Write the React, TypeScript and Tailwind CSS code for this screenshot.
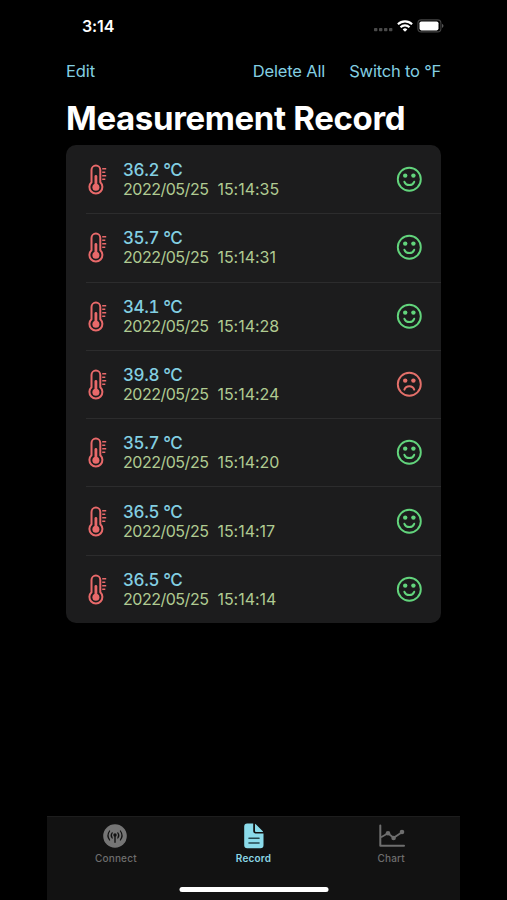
import { ReactNode } from "react";

type Measurement = {
  id: number;
  value: string;
  date: string;
  time: string;
  fever?: boolean;
};

const MEASUREMENTS: Measurement[] = [
  { id: 7, value: "36.2", date: "2022/05/25", time: "15:14:35" },
  { id: 6, value: "35.7", date: "2022/05/25", time: "15:14:31" },
  { id: 5, value: "34.1", date: "2022/05/25", time: "15:14:28" },
  { id: 4, value: "39.8", date: "2022/05/25", time: "15:14:24", fever: true },
  { id: 3, value: "35.7", date: "2022/05/25", time: "15:14:20" },
  { id: 2, value: "36.5", date: "2022/05/25", time: "15:14:17" },
  { id: 1, value: "36.5", date: "2022/05/25", time: "15:14:14" },
];

function ThermometerIcon() {
  return (
    <svg width="20" height="32" viewBox="0 0 20 32" fill="none" stroke="#e8696a" className="shrink-0">
      <path
        d="M4.5 7a4.4 4.4 0 0 1 8.8 0v12.2a6.5 6.5 0 1 1-8.8 0z"
        strokeWidth="2"
        strokeLinejoin="round"
      />
      <path d="M8.9 13.5v9.5" strokeWidth="2.8" strokeLinecap="round" />
      <circle cx="8.9" cy="24.2" r="3.5" fill="#e8696a" stroke="none" />
      <path d="M15.2 5.8h4M15.2 9.3h3.1M15.2 12.8h4M15.2 16.3h3.1" strokeWidth="1.5" />
    </svg>
  );
}

function FaceIcon({ sad }: { sad?: boolean }) {
  const color = sad ? "#e4706a" : "#62d47c";
  return (
    <svg width="26" height="26" viewBox="0 0 26 26" fill="none" stroke={color} className="shrink-0">
      <circle cx="13.3" cy="13.3" r="11.5" strokeWidth="1.9" />
      <circle cx="9.2" cy="9.6" r="2.2" fill={color} stroke="none" />
      <circle cx="17.4" cy="9.6" r="2.2" fill={color} stroke="none" />
      <path
        d={sad ? "M8.4 18.6c1.6-4.6 8.2-4.6 9.8 0" : "M8.4 15.8c1.7 4.4 8.1 4.4 9.8 0"}
        strokeWidth="2"
        strokeLinecap="round"
      />
    </svg>
  );
}

function StatusBar() {
  return (
    <div className="flex h-[52px] items-center justify-between pl-[35px] pr-[16px]">
      <span className="text-[16px] font-semibold tracking-[-0.1px]">3:14</span>
      <div className="flex items-center">
        <svg width="20" height="14" viewBox="0 0 20 14" fill="#4a4a4a">
          <rect x="1" y="9" width="3.4" height="3.2" rx="0.8" />
          <rect x="6" y="9" width="3.4" height="3.2" rx="0.8" />
          <rect x="11" y="9" width="3.4" height="3.2" rx="0.8" />
          <rect x="16" y="9" width="3.4" height="3.2" rx="0.8" />
        </svg>
        <svg width="16" height="12" viewBox="0 0 16 12" fill="none" stroke="#fff" strokeWidth="2.1" className="ml-[4px]">
          <path d="M.9 4.3a10.2 10.2 0 0 1 14.2 0" />
          <path d="M3.5 7.2a6.5 6.5 0 0 1 9 0" />
          <path d="M8 11.8 5.7 9.4a3.3 3.3 0 0 1 4.6 0z" fill="#fff" stroke="none" />
        </svg>
        <svg width="27" height="14" viewBox="0 0 27 14" className="ml-1">
          <rect x=".9" y=".9" width="23" height="12" rx="3.4" fill="none" stroke="#444" strokeWidth="1.1" />
          <rect x="2.5" y="2.4" width="19" height="9" rx="1.8" fill="#fff" />
          <path d="M25 4.8c2 .8 2 3.4 0 4.2z" fill="#555" />
        </svg>
      </div>
    </div>
  );
}

function MeasurementRow({ item, last }: { item: Measurement; last: boolean }) {
  return (
    <li className="flex flex-1 pl-5">
      <div className="flex w-[37px] items-center pl-px">
        <ThermometerIcon />
      </div>
      <div className="relative flex flex-1 items-center justify-between pr-[19px]">
        <div>
          <p className="pt-px text-[17px] leading-5 font-medium tracking-[-0.4px] text-[#83cfe2] tabular-nums">
            {item.value} °C
          </p>
          <p className="flex gap-[9px] text-[16px] leading-[19px] text-[#b0cb92]">
            <span className="tracking-[-0.48px]">{item.date}</span>
            <span className="tracking-[-0.02px]">{item.time}</span>
          </p>
        </div>
        <FaceIcon sad={item.fever} />
        {!last && <span className="absolute right-0 -bottom-px -left-[37px] h-px bg-[#2c2c2d]" />}
      </div>
    </li>
  );
}

function Tab({ label, active, children }: { label: string; active?: boolean; children: ReactNode }) {
  return (
    <button
      className={`flex flex-1 flex-col items-center text-[10px] leading-3 ${
        active ? "font-semibold tracking-[0.2px] text-[#8bd6e5]" : "font-medium tracking-[0.2px] text-[#6e6e6e]"
      }`}
    >
      <span className="flex h-[26px] items-center justify-center">{children}</span>
      <span className="mt-[3px]">{label}</span>
    </button>
  );
}

function TabBar() {
  return (
    <nav className="relative flex h-[84px] border-t border-[#1d1d1d] bg-[#121212] pt-[6px]">
      <Tab label="Connect">
        <svg width="24" height="24" viewBox="0 0 24 24" fill="none" className="mr-[2px]">
          <circle cx="12" cy="12" r="11.8" fill="#757575" />
          <g stroke="#121212" strokeWidth="1.2" strokeLinecap="round">
            <path d="M12 11v7.2" strokeWidth="1.4" />
            <path d="M9.2 8.8a4.2 4.2 0 0 0 0 5.2M14.8 8.8a4.2 4.2 0 0 1 0 5.2" />
            <path d="M6.6 7a7.6 7.6 0 0 0 0 9M17.4 7a7.6 7.6 0 0 1 0 9" />
          </g>
          <circle cx="12" cy="11" r="1.7" fill="#121212" />
        </svg>
      </Tab>
      <Tab label="Record" active>
        <svg width="20" height="26" viewBox="0 0 20 26" fill="#8bdbea">
          <path d="M3.2.5h6v7.3c0 1.9.8 2.7 2.7 2.7h7.6v11.8a3 3 0 0 1-3 3H3.2a3 3 0 0 1-3-3V3.5a3 3 0 0 1 3-3z" />
          <path d="M11 .8c.5.2.9.5 1.3.9l6 6c.4.4.7.8.8 1.3h-7.2c-.6 0-.9-.3-.9-.9z" />
          <path d="M5 15.3h10M5 20h10" stroke="#25464d" strokeWidth="1.6" strokeLinecap="round" />
        </svg>
      </Tab>
      <Tab label="Chart">
        <svg width="26" height="24" viewBox="0 0 26 24" fill="none" stroke="#6e6e6e" className="ml-px">
          <path d="M1.3 1.5v20.2H25" strokeWidth="2" strokeLinecap="round" strokeLinejoin="round" />
          <path d="m2 13.3 7-4 5.6 4.5 8.4-5.6" strokeWidth="1.8" />
          <g fill="#6e6e6e" stroke="none">
            <circle cx="9" cy="9.3" r="2.3" />
            <circle cx="14.6" cy="14" r="2.3" />
            <circle cx="23" cy="8" r="2.3" />
          </g>
        </svg>
      </Tab>
      <span className="absolute bottom-[8px] left-1/2 h-[5px] w-[149px] -translate-x-1/2 rounded-full bg-white" />
    </nav>
  );
}

export default function App() {
  return (
    <div className="h-[900px] w-[507px] bg-black font-['Inter',sans-serif] text-white">
      <div className="ml-[47px] flex h-full w-[413px] flex-col">
        <StatusBar />
        <header className="px-[19px]">
          <div className="flex h-[39px] items-center text-[16.5px] text-[#83cfe2]">
            <button className="tracking-[-0.1px]">Edit</button>
            <button className="ml-auto tracking-[-0.15px]">Delete All</button>
            <button className="ml-6 tracking-[-0.2px]">Switch to °F</button>
          </div>
          <h1 className="mt-[6px] text-[33px] leading-[42px] font-bold tracking-[-0.35px] whitespace-nowrap">
            Measurement Record
          </h1>
        </header>
        <ul className="mx-[19px] mt-[6px] flex h-[478px] w-[375px] flex-col rounded-[10px] bg-[#1c1c1d]">
          {MEASUREMENTS.map((item, i) => (
            <MeasurementRow key={item.id} item={item} last={i === MEASUREMENTS.length - 1} />
          ))}
        </ul>
        <div className="mt-auto">
          <TabBar />
        </div>
      </div>
    </div>
  );
}
